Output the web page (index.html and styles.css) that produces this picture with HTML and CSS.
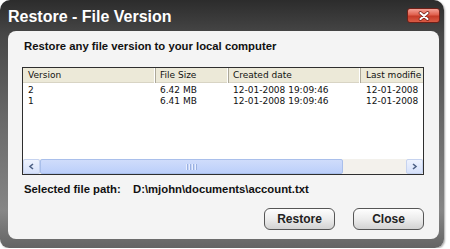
FILE: index.html
```html
<!DOCTYPE html>
<html lang="en">

<head>
    <meta charset="UTF-8">
    <title>Restore - File Version</title>
    <link rel="stylesheet" href="styles.css">
</head>

<body>
    <div class="window">
        <div class="titlebar">
            <span class="title">Restore - File Version</span>
            <button class="close-x" type="button">
                <svg width="12" height="10" viewBox="0 0 12 10">
                    <path d="M2.5 2 L9.5 8 M9.5 2 L2.5 8" stroke="#6b1a12" stroke-width="3.6" stroke-linecap="round" />
                    <path d="M2.5 2 L9.5 8 M9.5 2 L2.5 8" stroke="#fff" stroke-width="2.2" stroke-linecap="round" />
                </svg>
            </button>
        </div>
        <div class="panel">
            <p class="intro">Restore any file version to your local computer</p>
            <div class="list">
                <div class="list-view">
                    <div class="list-row list-head">
                        <span>Version</span>
                        <span>File Size</span>
                        <span>Created date</span>
                        <span>Last modifie</span>
                    </div>
                    <div class="list-row">
                        <span>2</span>
                        <span>6.42 MB</span>
                        <span>12-01-2008 19:09:46</span>
                        <span>12-01-2008</span>
                    </div>
                    <div class="list-row">
                        <span>1</span>
                        <span>6.41 MB</span>
                        <span>12-01-2008 19:09:46</span>
                        <span>12-01-2008</span>
                    </div>
                </div>
                <div class="hscroll">
                    <span class="arrow">
                        <svg width="7" height="7" viewBox="0 0 7 7"><path d="M5 1 L2 3.5 L5 6" fill="none" stroke="#4d6185" stroke-width="1.6" /></svg>
                    </span>
                    <span class="thumb"><i></i><i></i><i></i><i></i></span>
                    <span class="track"></span>
                    <span class="arrow">
                        <svg width="7" height="7" viewBox="0 0 7 7"><path d="M2 1 L5 3.5 L2 6" fill="none" stroke="#4d6185" stroke-width="1.6" /></svg>
                    </span>
                </div>
            </div>
            <div class="path">
                <span class="path-label">Selected file path:</span>
                <span>D:\mjohn\documents\account.txt</span>
            </div>
            <div class="actions">
                <button class="btn" type="button">Restore</button>
                <button class="btn" type="button">Close</button>
            </div>
        </div>
    </div>
</body>

</html>
```

FILE: styles.css
```css
* {
    margin: 0;
    padding: 0;
    box-sizing: border-box;
}

body {
    background: #fff;
    font-family: "Liberation Sans", Arial, sans-serif;
}

.window {
    width: 444px;
    height: 248px;
    padding: 0 5px 9px 8px;
    display: flex;
    flex-direction: column;
    border-radius: 10px 10px 9px 9px;
    background: linear-gradient(#2c2c2c, #474747 14%, #6a6a6a 50%, #868686 85%, #646464);
    box-shadow: 1px 1px 2px rgba(0, 0, 0, .35);
}

.titlebar {
    height: 31px;
    display: flex;
    justify-content: space-between;
    align-items: flex-start;
}

.title {
    margin-top: 7px;
    color: #fff;
    font-size: 16px;
    font-weight: bold;
    line-height: 20px;
}

.close-x {
    width: 33px;
    height: 15px;
    margin-top: 8px;
    margin-right: -1px;
    display: flex;
    align-items: center;
    justify-content: center;
    border: 1px solid #6e2018;
    border-radius: 3px;
    background: linear-gradient(#f4a196, #e0604d 45%, #c63b28 55%, #d95b45);
}

/* 内容区 */

.panel {
    flex: 1;
    display: flex;
    flex-direction: column;
    padding: 9px 15px 9px 14px;
    border-radius: 8px;
    background: #f4f4f4;
}

.intro {
    margin: 0 0 14px 2px;
    color: #111;
    font-size: 11.3px;
    font-weight: bold;
    line-height: 13px;
}

.list {
    height: 108px;
    display: flex;
    flex-direction: column;
    border: 1px solid #2e2e2e;
    background: #fff;
}

.list-view {
    flex: 1;
    overflow: hidden;
    font-family: "DejaVu Sans", Tahoma, sans-serif;
    font-size: 9px;
    color: #111;
}

.list-row {
    display: grid;
    grid-template-columns: 133px 73px 132px 1fr;
    height: 11px;
    line-height: 11px;
}

.list-row span {
    padding-left: 5px;
    white-space: nowrap;
}

.list-row span:nth-child(2),
.list-row span:nth-child(3) {
    padding-left: 4px;
}

.list-head {
    height: 15px;
    line-height: 15px;
    margin-bottom: 2px;
    background: #ece9d8;
    border-bottom: 1px solid #d8d4c4;
}

.list-head span {
    border-right: 1px solid #aca899;
    box-shadow: inset -1px 0 0 #fff;
}

.list-head span:last-child {
    border-right: 0;
    box-shadow: none;
}

.hscroll {
    height: 15px;
    display: flex;
    background: #f3f1ec;
}

.arrow {
    width: 17px;
    display: flex;
    align-items: center;
    justify-content: center;
    border: 1px solid #c6d3ef;
    border-radius: 2px;
    background: linear-gradient(#eef3fe, #d6e1fa);
}

.thumb {
    width: 303px;
    display: flex;
    align-items: center;
    justify-content: center;
    gap: 1px;
    border: 1px solid #a9bfeb;
    border-radius: 2px;
    background: linear-gradient(#cfdcfb, #bccffa);
}

.thumb i {
    width: 1px;
    height: 6px;
    background: #e8eefd;
    box-shadow: 1px 0 0 #9bb1e0;
    margin-right: 1px;
}

.track {
    flex: 1;
}

.path {
    margin: 8px 0 0 2px;
    display: flex;
    color: #111;
    font-size: 11.3px;
    font-weight: bold;
    line-height: 13px;
}

.path-label {
    width: 109px;
}

.actions {
    margin-top: auto;
    display: flex;
    justify-content: flex-end;
    gap: 18px;
}

.btn {
    width: 71px;
    height: 22px;
    border: 1px solid #555;
    border-radius: 6px;
    background: linear-gradient(#fefefe, #ececec 50%, #d2d2d2);
    color: #222;
    font-family: "Liberation Sans", Arial, sans-serif;
    font-size: 12px;
    font-weight: bold;
}
```
